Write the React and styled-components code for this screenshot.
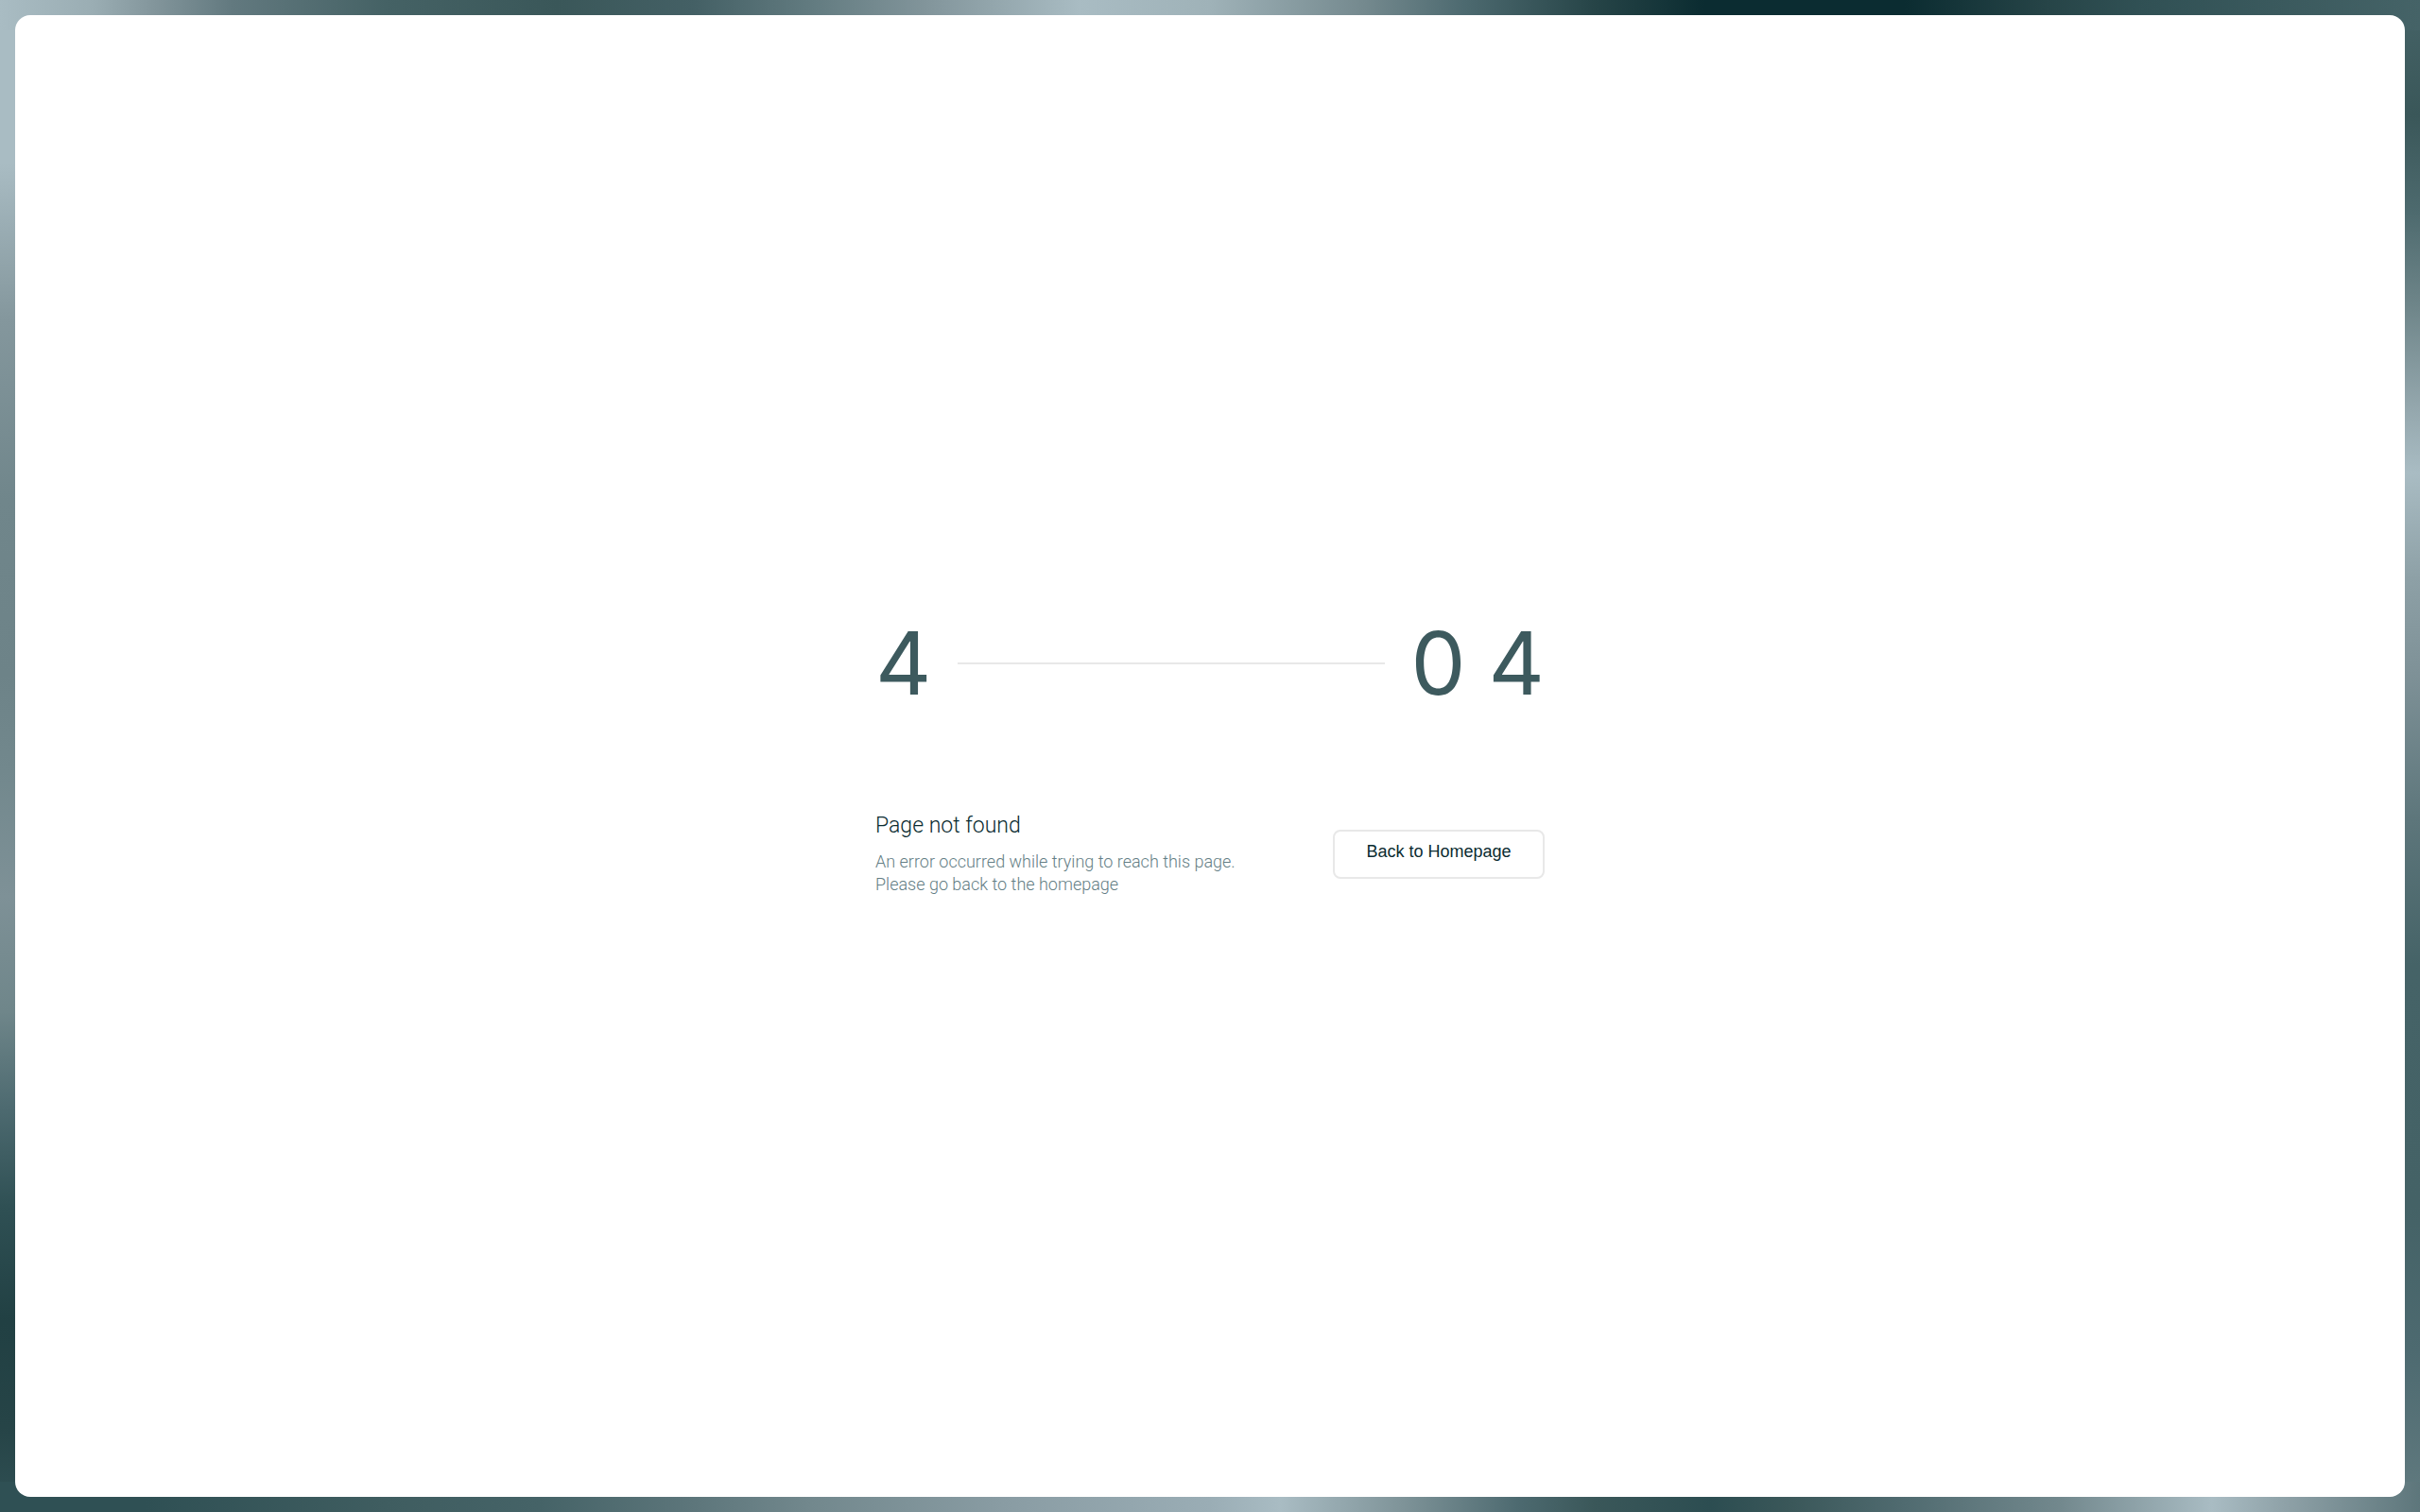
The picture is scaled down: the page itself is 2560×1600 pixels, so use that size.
import React from "react";
import styled, { createGlobalStyle } from "styled-components";

const GlobalStyle = createGlobalStyle`
  *, *::before, *::after { box-sizing: border-box; }
  body { margin: 0; }
`;

const topEdge = `linear-gradient(to right,
  #a9bcc3 0%, #9aadb3 3.9%, #82959b 6.4%, #62797f 9.6%, #456265 15.9%, #3a5759 23%, #446065 28.7%,
  #627b80 33.5%, #82959b 38.3%, #a9bcc3 44.6%, #9fb2b8 50%, #74898e 56.4%, #4d6a70 60.5%, #264447 65.9%,
  #0b2c31 70.4%, #0b2c31 78.7%, #264447 84.5%, #305054 88.3%, #456367 100%)`;

const bottomEdge = `linear-gradient(to right,
  #2f5054 0%, #2f5054 6%, #3f5d60 15.9%, #456367 22.3%, #5d767b 28.7%, #72888d 33.5%, #899ca3 41.4%,
  #9aadb5 50%, #a9bcc3 52.9%, #7e9398 58%, #4d6a70 62.7%, #3a5759 65.9%, #2c4d51 70.7%, #3a5759 73.9%,
  #506b70 78.7%, #72888d 85.1%, #a9bcc3 91.4%, #8da0a6 94.6%, #5d767b 100%)`;

const leftEdge = `linear-gradient(to bottom,
  #a9bcc3 0%, #a9bcc3 10.8%, #84979d 21.1%, #70868b 33.1%, #6d8388 44.6%, #72888d 51%, #7e9197 59.3%,
  #6f868a 66.9%, #4d6a70 73.3%, #2f5054 79.8%, #214043 87.4%, #264447 94.4%, #305054 100%)`;

const rightEdge = `linear-gradient(to bottom,
  #456367 0%, #3a5759 7.6%, #4d6a6e 14%, #6f868a 20.4%, #93a6ac 26.8%, #a9bcc3 31.3%, #8da0a6 38.3%,
  #7e9197 44.6%, #5d767b 54.2%, #456367 63.8%, #446266 79.8%, #4d6a70 89.3%, #627b80 100%)`;

const Frame = styled.div`
  display: flex;
  min-height: 100vh;
  padding: 16px;
  background:
    ${topEdge} top / 100% 32px no-repeat,
    ${bottomEdge} bottom / 100% 32px no-repeat,
    ${leftEdge} left / 32px 100% no-repeat,
    ${rightEdge} right / 32px 100% no-repeat;
`;

const Panel = styled.main`
  flex: 1;
  display: grid;
  place-items: center;
  border-radius: 16px;
  background: #fff;
`;

const Message = styled.section`
  display: flex;
  flex-direction: column;
  gap: 96px;
  width: 100%;
  max-width: 708px;
  padding-bottom: 4px;
`;

const Code = styled.h1`
  display: flex;
  align-items: center;
  gap: 24px;
  margin: 0;
  color: #3d5a5e;
  font: 400 92px/116px Inter, sans-serif;
`;

const Rule = styled.span`
  flex: 1;
  height: 2px;
  margin: 0 4px;
  background: #e8e8e8;
`;

const Details = styled.div`
  display: flex;
  align-items: center;
  justify-content: space-between;
  gap: 32px;
`;

const Copy = styled.div`
  display: flex;
  flex-direction: column;
  gap: 8px;
  padding-bottom: 4px;
  font-family: Roboto, sans-serif;
  font-weight: 300;
`;

const Title = styled.h2`
  margin: 0;
  color: #0b2c31;
  font-size: 23px;
  font-weight: 300;
  line-height: 36px;
`;

const Text = styled.p`
  margin: 0;
  color: #647e85;
  font-size: 18px;
  line-height: 24px;
`;

const HomeLink = styled.a`
  min-width: 224px;
  padding: 9px 32px 15px;
  border: 2px solid #e8e8e8;
  border-radius: 8px;
  color: #0b2c31;
  font: 400 18px/24px "Liberation Sans", sans-serif;
  text-align: center;
  text-decoration: none;
  white-space: nowrap;
`;

export default function App() {
  return (
    <Frame>
      <GlobalStyle />
      <Panel>
        <Message>
          <Code>
            <span>4</span>
            <Rule />
            <span>0</span>
            <span>4</span>
          </Code>
          <Details>
            <Copy>
              <Title>Page not found</Title>
              <Text>
                An error occurred while trying to reach this page.
                <br />
                Please go back to the homepage
              </Text>
            </Copy>
            <HomeLink href="/">Back to Homepage</HomeLink>
          </Details>
        </Message>
      </Panel>
    </Frame>
  );
}
